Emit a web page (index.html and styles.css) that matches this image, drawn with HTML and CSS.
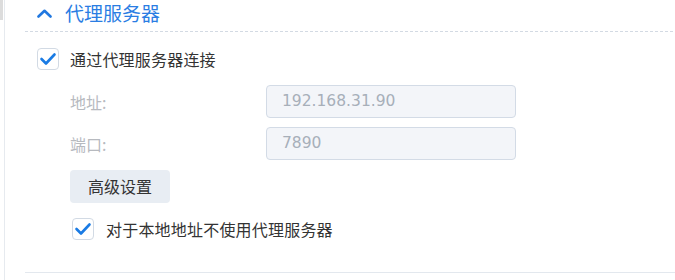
FILE: index.html
```html
<!DOCTYPE html>
<html lang="zh-CN">
<head>
<meta charset="utf-8">
<link rel="stylesheet" href="styles.css">
</head>
<body>
<div class="frame">
  <div class="scroll"><div class="thumb"></div></div>
  <div class="panel">
    <div class="header">
      <svg class="chevron" width="15" height="9" viewBox="0 0 15 9"><polyline points="1.5,7.5 7.5,1.8 13.5,7.5" fill="none" stroke="#2178e0" stroke-width="2.6" stroke-linecap="round" stroke-linejoin="round"/></svg>
      <span class="title">代理服务器</span>
    </div>
    <div class="dash"></div>
    <div class="body">
      <label class="check-row">
        <span class="box"><svg width="22" height="22" viewBox="0 0 22 22"><polyline points="4.5,11 9,15.5 17.5,6.5" fill="none" stroke="#1a7be4" stroke-width="2.6" stroke-linecap="round" stroke-linejoin="round"/></svg></span>
        <span class="text">通过代理服务器连接</span>
      </label>
      <div class="fields">
        <div class="field">
          <span class="label">地址:</span>
          <div class="input">192.168.31.90</div>
        </div>
        <div class="field">
          <span class="label">端口:</span>
          <div class="input">7890</div>
        </div>
        <div class="btn">高级设置</div>
        <label class="check-row sub">
          <span class="box"><svg width="22" height="22" viewBox="0 0 22 22"><polyline points="4.5,11 9,15.5 17.5,6.5" fill="none" stroke="#1a7be4" stroke-width="2.6" stroke-linecap="round" stroke-linejoin="round"/></svg></span>
          <span class="text">对于本地地址不使用代理服务器</span>
        </label>
      </div>
    </div>
    <div class="rule"></div>
  </div>
</div>
</body>
</html>
```
FILE: styles.css
```css
html, body {
  margin: 0;
  padding: 0;
  background: #ffffff;
}
body {
  font-family: "Noto Sans CJK SC", "Noto Sans", sans-serif;
  color: #333333;
}
.frame {
  display: flex;
  height: 280px;
  overflow: hidden;
}
.scroll {
  width: 4px;
  flex: none;
}
.thumb {
  width: 3px;
  height: 20px;
  background: #dcdcdc;
}
.panel {
  flex: 1;
  border-left: 1px solid #e6eaef;
  padding-left: 20px;
}
.header {
  height: 31px;
  display: flex;
  align-items: center;
  padding-left: 12px;
}
.chevron {
  display: block;
  margin-top: -5px;
}
.title {
  margin-left: 13px;
  font-size: 19px;
  line-height: 24px;
  margin-top: -6px;
  color: #2a7de3;
}
.dash {
  height: 1px;
  background: repeating-linear-gradient(to right, #d3dae3 0 3px, transparent 3px 5px);
}
.body {
  padding-left: 12px;
  padding-top: 16px;
}
.check-row {
  display: flex;
  align-items: center;
  height: 22px;
}
.box {
  width: 22px;
  height: 22px;
  box-sizing: border-box;
  border: 1px solid #d2dae4;
  border-radius: 4px;
  background: #fff;
  position: relative;
  flex: none;
}
.box svg {
  position: absolute;
  left: -1px;
  top: -1px;
}
.text {
  margin-left: 11px;
  font-size: 16px;
  letter-spacing: 0.2px;
  line-height: 22px;
  color: #333;
}
.fields {
  padding-left: 33px;
  padding-top: 15px;
}
.field {
  display: flex;
  align-items: center;
  margin-bottom: 9px;
}
.label {
  width: 196px;
  font-size: 16px;
  color: #b7babf;
}
.input {
  width: 250px;
  height: 33px;
  box-sizing: border-box;
  border: 1px solid #d3dbe6;
  border-radius: 4px;
  background: #f3f5f9;
  padding-left: 15px;
  font-family: "DejaVu Sans", sans-serif;
  font-size: 15.5px;
  line-height: 31px;
  color: #a7afb9;
}
.btn {
  display: inline-block;
  width: 100px;
  height: 33px;
  box-sizing: border-box;
  border-radius: 4px;
  background: #e8edf3;
  font-size: 16px;
  line-height: 33px;
  text-align: center;
  color: #333;
  margin-top: 1px;
}
.check-row.sub {
  margin-top: 15px;
  margin-left: 2px;
}
.check-row.sub .text {
  margin-left: 12px;
}
.rule {
  margin-top: 32px;
  height: 1px;
  background: #e3e8ee;
}
```
